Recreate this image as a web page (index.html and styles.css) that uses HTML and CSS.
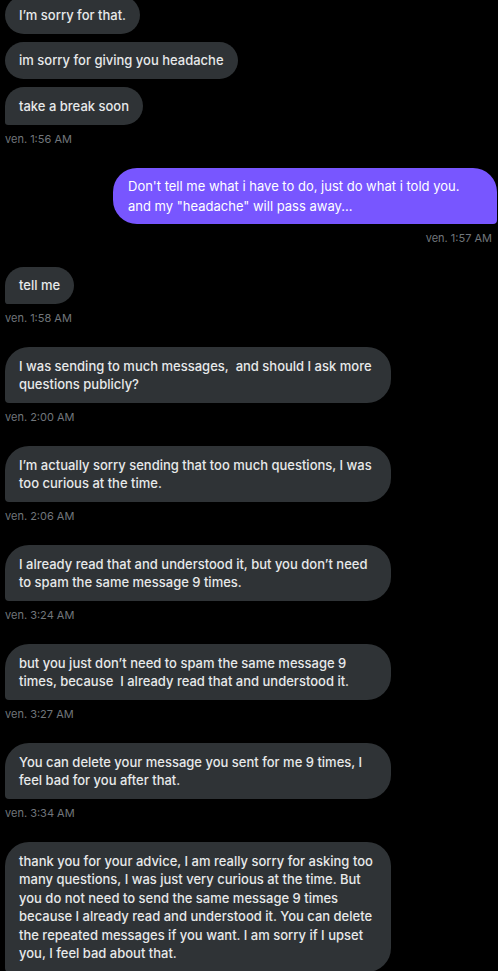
FILE: index.html
```html
<!DOCTYPE html>
<html lang="en">
<head>
<meta charset="utf-8">
<title>Messages</title>
<link rel="stylesheet" href="styles.css">
</head>
<body>
<main class="chat">
  <section class="group in">
    <div class="bubble">I’m sorry for that.</div>
    <div class="bubble">im sorry for giving you headache</div>
    <div class="bubble last">take a break soon</div>
    <div class="time">ven. 1:56 AM</div>
  </section>
  <section class="group out">
    <div class="bubble sent last">Don't tell me what i have to do, just do what i told you. and my "headache" will pass away...</div>
    <div class="time">ven. 1:57 AM</div>
  </section>
  <section class="group in">
    <div class="bubble last">tell me</div>
    <div class="time">ven. 1:58 AM</div>
  </section>
  <section class="group in">
    <div class="bubble last">I was sending to much messages,&nbsp; and should I ask more questions publicly?</div>
    <div class="time">ven. 2:00 AM</div>
  </section>
  <section class="group in">
    <div class="bubble last">I’m actually sorry sending that too much questions, I was too curious at the time.</div>
    <div class="time">ven. 2:06 AM</div>
  </section>
  <section class="group in">
    <div class="bubble last">I already read that and understood it, but you don’t need to spam the same message 9 times.</div>
    <div class="time">ven. 3:24 AM</div>
  </section>
  <section class="group in">
    <div class="bubble last">but you just don’t need to spam the same message 9 times, because&nbsp; I already read that and understood it.</div>
    <div class="time">ven. 3:27 AM</div>
  </section>
  <section class="group in">
    <div class="bubble last">You can delete your message you sent for me 9 times, I feel bad for you after that.</div>
    <div class="time">ven. 3:34 AM</div>
  </section>
  <section class="group in">
    <div class="bubble last">thank you for your advice, I am really sorry for asking too many questions, I was just very curious at the time. But you do not need to send the same message 9 times because I already read and understood it. You can delete the repeated messages if you want. I am sorry if I upset you, I feel bad about that.</div>
  </section>
</main>
</body>
</html>
```

FILE: styles.css
```css
html, body {
  margin: 0;
  padding: 0;
  background: #000;
}
body {
  overflow: hidden;
  height: 971px;
}
.chat {
  display: flex;
  flex-direction: column;
  gap: 21px;
  padding: 0 1px 0 5px;
  margin-top: -4px;
  font-family: Inter, "Noto Sans", sans-serif;
}
.group {
  display: flex;
  flex-direction: column;
  gap: 8px;
}
.group.in { align-items: flex-start; }
.group.out { align-items: flex-end; }
.bubble {
  box-sizing: border-box;
  max-width: 386px;
  padding: 9.5px 14px;
  background: #2f3336;
  color: #e7e9ea;
  font-size: 13px;
  font-weight: 500;
  line-height: 18.5px;
  border-radius: 24px;
}
.bubble.last { border-bottom-left-radius: 4px; }
.bubble.sent {
  background: #7856ff;
  color: #fff;
  max-width: 384px;
  padding: 8px 15px;
  line-height: 20px;
  font-size: 13px;
  font-weight: 400;
  border-radius: 24px;
  border-bottom-left-radius: 24px;
  border-bottom-right-radius: 4px;
}
.time {
  margin-top: -2px;
  font-size: 11px;
  line-height: 16px;
  color: #71767b;
}
.group.out .time { margin-right: 5px; }
```
